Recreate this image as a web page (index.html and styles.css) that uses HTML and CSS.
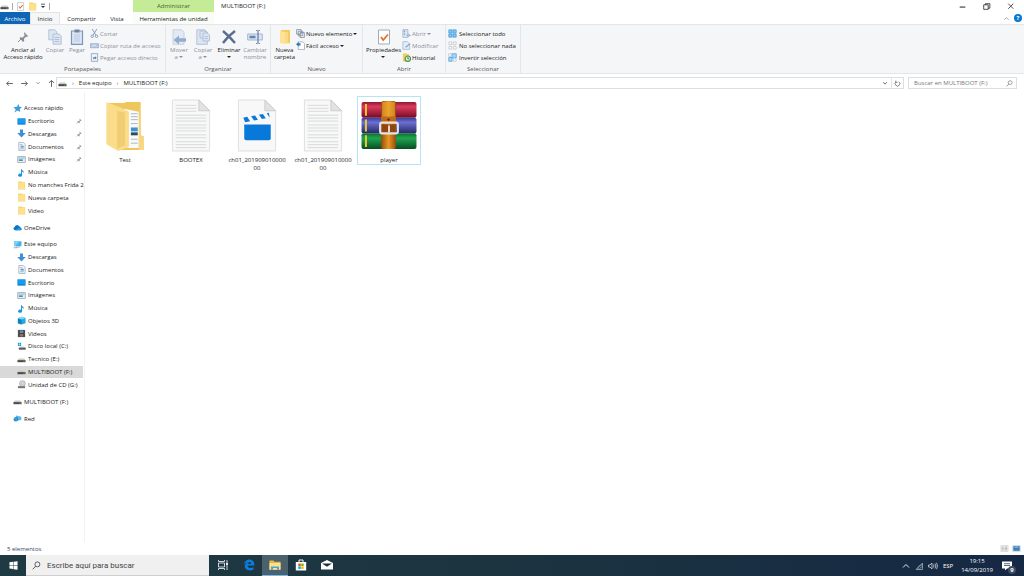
FILE: index.html
```html
<!DOCTYPE html>
<html lang="es">
<head>
<meta charset="utf-8">
<title>MULTIBOOT (F:)</title>
<link rel="stylesheet" href="styles.css">
</head>
<body>
<svg class="sprite" aria-hidden="true">
  <symbol id="drive" viewBox="0 0 10 8"><path d="M2 3h6l1.500 2h-9z" fill="#c9c9c9"/><path d="M.5 4.700h9v2.300h-9z" fill="#4a4a4a"/><path d="M7 5.500h1.500v.7H7z" fill="#59b86a"/></symbol>
  <symbol id="folder" viewBox="0 0 10 11"><path d="M1 .5h4l1 1h3.500v9H1z" fill="#f5cf67"/><path d="M1.500 2h7.500v8H1.500z" fill="#ffe08c"/></symbol>
  <symbol id="bigfolder" viewBox="0 0 14 16"><path d="M3 1h9v13H3z" fill="#f3cb62"/><path d="M2 2l5 1v12l-5-1z" fill="#ffe295"/><path d="M7 3h3v10l2 1.500H7z" fill="#fadb81"/></symbol>
  <symbol id="pin" viewBox="0 0 12 12"><path d="M7 1l4 4-1 1-1-.3-2 2 .2 2.300-1 .9L2.500 7.200l.8-.9 2.300.2 2-2L7 2z" fill="#87909a"/><path d="M4.500 7.500L1 11" stroke="#87909a" stroke-width="1"/></symbol>
  <symbol id="star" viewBox="0 0 10 10"><path d="M6 0l1 3 3 .5-2.500 2L8 9 5 7.200 1.500 9.500 3 6 .5 3.500 4.500 3z" fill="#3d9be0"/></symbol>
  <symbol id="desktop" viewBox="0 0 10 9"><path d="M.5 1h9v7h-9z" fill="#0a84d8"/><path d="M1 1.500h8v5H1z" fill="#159cf0"/></symbol>
  <symbol id="down" viewBox="0 0 10 10"><path d="M3.300.5h3.400v4h3L5 9.500.3 4.500h3z" fill="#3f8fd6"/></symbol>
  <symbol id="doc" viewBox="0 0 10 10"><path d="M2 .5h5l2 2v7H2z" fill="#f5f8fa" stroke="#8a9aa8" stroke-width=".7"/><path d="M3.200 3h3M3.200 7.500h4.500" stroke="#6b96bd" stroke-width=".7"/><path d="M4 4.200h3.500v2H4z" fill="#5b9bd0"/></symbol>
  <symbol id="image" viewBox="0 0 10 9"><path d="M.7 1.200h8.600v6.600H.7z" fill="#e6f1f7" stroke="#8797a2" stroke-width=".7"/><path d="M1.300 2h7.300v2H1.300z" fill="#a9d2ee"/><path d="M2 4.500h4.500v1.400H2z" fill="#386d91"/></symbol>
  <symbol id="music" viewBox="0 0 10 10"><path d="M4.500.5c.5 2 3.800 2 3 5.300C7.200 4.500 6.300 4 5.600 3.900V8a2.200 1.700 0 1 1-1.100-1.500z" fill="#1c93df"/></symbol>
  <symbol id="cloud" viewBox="0 0 12 10"><path d="M2.500 8.500a2.200 2.200 0 0 1-.2-4.300 3.200 3.200 0 0 1 5.700-1 2.600 2.600 0 0 1 2.300 2 1.700 1.700 0 0 1-.2 3.300z" fill="#0b73c8"/><path d="M3 8.500L8 5l3.500 2c0 1-.7 1.500-1.500 1.500z" fill="#2798e3"/></symbol>
  <symbol id="pc" viewBox="0 0 12 10"><path d="M1.500.7h9.800v6.600H1.500z" fill="#42b3ee"/><path d="M1.500.7h7L3 7.300H1.500z" fill="#7fd0f5"/><path d="M4 8.500h5M1 9.300h4" stroke="#718797" stroke-width=".9"/></symbol>
  <symbol id="cube" viewBox="0 0 10 10"><path d="M1 2.500L5.500.7l4 1.600V8L5 9.500 1 8z" fill="#28a8d8"/><path d="M1 2.500l4 1.300v5.700L1 8z" fill="#0c83bd"/><path d="M1 2.500L5.500.7l4 1.600L5 3.800z" fill="#81dcf3"/></symbol>
  <symbol id="film" viewBox="0 0 10 10"><path d="M1 1h8v8H1z" fill="#323840"/><path d="M3 1.500h4v3H3z" fill="#668eb5"/><path d="M3 5.500h4v3H3z" fill="#9b6f58"/><path d="M2 1.500v7M8 1.500v7" stroke="#aaa" stroke-width=".7" stroke-dasharray=".8 .8"/></symbol>
  <symbol id="windrive" viewBox="0 0 10 10"><path d="M1 .8h1.600v1.600H1zM3 .8h1.600v1.600H3zM1 2.800h1.600v1.600H1zM3 2.800h1.600v1.600H3z" fill="#1597e5"/><path d="M3 5h5l1.500 1.500h-7z" fill="#c9c9c9"/><path d="M2 6.300h7.700v2.200H2z" fill="#555"/></symbol>
  <symbol id="cd" viewBox="0 0 10 10"><circle cx="6" cy="4" r="3.300" fill="#d6d9da" stroke="#8e9294" stroke-width=".6"/><circle cx="6" cy="4" r="1" fill="#fff" stroke="#888" stroke-width=".4"/><path d="M1 6.800h8v2.300H1z" fill="#777"/></symbol>
  <symbol id="network" viewBox="0 0 12 10"><path d="M4 1l7 1.500V7L4 8z" fill="#55b8ea"/><circle cx="3.800" cy="6" r="3" fill="#2685c9"/><path d="M1.500 5l3 .4L4 8" stroke="#8bd0ef" fill="none" stroke-width=".7"/></symbol>
  <symbol id="check" viewBox="0 0 14 16"><path d="M1.500 1h11v14h-11z" fill="#fff" stroke="#a3acb5"/><path d="M4 8l2.200 3L11 5.500" fill="none" stroke="#e8702a" stroke-width="1.800"/></symbol>
  <symbol id="copy" viewBox="0 0 14 16"><g fill="#dce6f3" stroke="#a7b8d1" stroke-width=".8"><path d="M.8.8h6l2 2v8h-8z"/><path d="M5 5h6l2.200 2v8.200H5z"/></g><path d="M6.500 8.500h5M6.500 10.500h5M6.500 12.500h5" stroke="#a7b8d1" stroke-width=".8"/></symbol>
  <symbol id="copyto" viewBox="0 0 14 16"><g fill="#dce6f3" stroke="#a7b8d1" stroke-width=".8"><path d="M.8.8h8l2.500 2.500v12H.8z"/><path d="M4 2h5l1.800 1.800V9H4z"/><path d="M7 4h4.500l2 2v6H7z"/></g><path d="M8.500 7.500h3.500M8.500 9.500h3.500" stroke="#a7b8d1" stroke-width=".8"/></symbol>
  <symbol id="paste" viewBox="0 0 14 16"><path d="M1.500 2h11v13.300h-11z" fill="#dbe6f5" stroke="#7d95b9" stroke-width="1.200"/><path d="M4.500.5h5v3h-5z" fill="#71839f"/><path d="M4 6h6M4 8h6M4 10h6M4 12h6" stroke="#b2c3da" stroke-width=".8"/></symbol>
  <symbol id="cut" viewBox="0 0 10 10"><path d="M2.500 0l4 7M7.500 0l-4 7" stroke="#8495b4" fill="none"/><circle cx="2.500" cy="8" r="1.400" fill="none" stroke="#7f9cc8"/><circle cx="7.300" cy="8" r="1.400" fill="none" stroke="#7f9cc8"/></symbol>
  <symbol id="path" viewBox="0 0 10 10"><path d="M.5 3h9v4.500h-9z" fill="#b5c8e4" stroke="#8ba3c9" stroke-width=".7"/><path d="M2 5.500h1l1-1 1 1 1-1 1 1" stroke="#fff" fill="none" stroke-width=".8"/></symbol>
  <symbol id="shortcut" viewBox="0 0 10 10"><path d="M1.500.7h7v8.600h-7z" fill="#eef3fa" stroke="#7d93b7" stroke-width=".8"/><path d="M3.500 7V4.700h2V3.500l2 1.800-2 1.800V6z" fill="#5e7fb1"/></symbol>
  <symbol id="move" viewBox="0 0 16 16"><path d="M2 .8h8.500l2.500 2.500v12H2z" fill="#e2eaf4" stroke="#bccadd" stroke-width=".8"/><path d="M2.500 11L8 6.500v2.700h7v3.600H8v2.700z" fill="#92acd0"/></symbol>
  <symbol id="cross" viewBox="0 0 16 16"><path d="M2 2q6 5 12 12M14 2Q7 7 2 14" stroke="#596d91" stroke-width="2.400" fill="none"/></symbol>
  <symbol id="rename" viewBox="0 0 16 16"><path d="M.7 5h14.600v6H.7z" fill="#dbe5f3" stroke="#a5b7d2"/><path d="M2.500 6.700h6v2.600h-6z" fill="#6684b2"/><path d="M9 1.500c2 0 2 0 2 2v9c0 2 0 2-2 2M13 1.500c-2 0-2 0-2 2v9c0 2 0 2 2 2" fill="none" stroke="#7b8eaf"/></symbol>
  <symbol id="newitem" viewBox="0 0 10 10"><path d="M.7.7h5v5h-5zM2.500 2.500h5v5h-5zM4.500 4h4.800v5.500H4.500z" fill="#f5f7fa" stroke="#6e8092" stroke-width=".8"/></symbol>
  <symbol id="easy" viewBox="0 0 10 10"><path d="M2.500 1h5l2 2v6.500h-7z" fill="#fff" stroke="#8595a5" stroke-width=".7"/><path d="M0 3.500L3 1v1.500h2V5H3v1.200z" fill="#2979b8"/></symbol>
  <symbol id="open" viewBox="0 0 10 10"><path d="M1 .7h5.500v8.600H1z" fill="#dfe8f5" stroke="#91a8cf" stroke-width=".8"/><path d="M2 2h1.500v1.500H2zM2 5h1.500v1.500H2z" fill="#7896c5"/><path d="M5 7h4M7 5l2 2-2 2" fill="none" stroke="#91a8cf"/></symbol>
  <symbol id="edit" viewBox="0 0 10 10"><path d="M1 .7h5l2.500 2.500v6.100H1z" fill="#e4ecf8" stroke="#9cb2d6" stroke-width=".8"/><path d="M4 7l5-4" stroke="#88a6d6" stroke-width="1.400"/></symbol>
  <symbol id="history" viewBox="0 0 10 10"><path d="M1 .5h4l1 1h2v8H1z" fill="#f2cc5d"/><circle cx="6.500" cy="6.300" r="3" fill="#e3f1df" stroke="#49914b" stroke-width="1.200"/><path d="M6.500 4.500v2h1.500" fill="none" stroke="#376"/></symbol>
  <symbol id="all" viewBox="0 0 10 10"><path d="M.5.500h9v9h-9z" fill="#a6d6f8"/><path d="M1 1h3.300v3.300H1zM5.700 1H9v3.300H5.700zM1 5.700h3.300V9H1zM5.700 5.700H9V9H5.700z" fill="#8ac8f3" stroke="#3993d9" stroke-width=".7"/></symbol>
  <symbol id="none" viewBox="0 0 10 10"><path d="M1 1h3v3H1zM6 1h3v3H6zM1 6h3v3H1zM6 6h3v3H6z" fill="#fff" stroke="#b4bbc1" stroke-width=".7"/></symbol>
  <symbol id="invert" viewBox="0 0 10 10"><path d="M4.500.8h4.700v4.700H4.500zM.8 5h3.700v4.200H.8z" fill="#a9d5f6" stroke="#4a9ddd" stroke-width=".8"/><path d="M.8.8h2.700v3H.8zM6 6.500h3v2.700H6z" fill="#fff" stroke="#9ebbd2" stroke-width=".7"/></symbol>
  <symbol id="search" viewBox="0 0 12 12"><circle cx="7.200" cy="4.500" r="3.300" fill="none" stroke="currentColor"/><path d="M4.800 7L1 11" stroke="currentColor" stroke-width="1.100"/></symbol>
  <symbol id="sheet" viewBox="0 0 40 54"><path d="M1 1h27l11 11v41H1z" fill="#f8f8f8" stroke="#dedede"/><path d="M28 1v11h11z" fill="#e2e2e2" stroke="#c4c4c4" stroke-width=".8"/></symbol>
  <symbol id="text" viewBox="0 0 40 54"><use href="#sheet"/><path d="M4.500 6.500h21M4.500 9.500h21M4.500 12.500h21M4.500 16.500h31M4.500 19.500h31M4.500 22.500h31M4.500 26.500h31M4.500 29.500h31M4.500 32.500h31M4.500 36.500h31M4.500 39.500h31M4.500 43.500h31M4.500 46.500h31M4.500 49.500h31" stroke="#d0d3d3" stroke-width=".8"/></symbol>
</svg>

<div class="window">
  <header class="titlebar">
    <div class="quick">
      <svg class="ic"><use href="#drive"/></svg><i class="bar"></i>
      <svg class="ic"><use href="#check"/></svg><svg class="ic"><use href="#folder"/></svg>
      <svg class="ic small" viewBox="0 0 6 6"><path d="M1 1.200h4" stroke="#333" stroke-width=".8"/><path d="M1 3h4L3 5z" fill="#333"/></svg><i class="bar"></i>
    </div>
    <div class="context">Administrar</div>
    <h1 class="title">MULTIBOOT (F:)</h1>
    <div class="controls">
      <button aria-label="Minimizar"><svg class="ic" viewBox="0 0 8 8"><path d="M1.500 4.500h5" stroke="#222" stroke-width=".9"/></svg></button>
      <button aria-label="Restaurar"><svg class="ic" viewBox="0 0 8 8"><path d="M1.500 2.500h4v4h-4zM3 2.500V1.500h4v4H5.500" fill="none" stroke="#222" stroke-width=".7"/></svg></button>
      <button aria-label="Cerrar"><svg class="ic" viewBox="0 0 8 8"><path d="M2 1.500l4.500 4.500M6.500 1.500L2 6" stroke="#222" stroke-width=".7"/></svg></button>
    </div>
  </header>

  <nav class="tabs">
    <button class="tab file">Archivo</button>
    <button class="tab active">Inicio</button>
    <button class="tab share">Compartir</button>
    <button class="tab view">Vista</button>
    <button class="tab tools">Herramientas de unidad</button>
    <div class="help">
      <svg class="ic" viewBox="0 0 8 8"><path d="M2 5l2-1.700L6 5" fill="none" stroke="#999" stroke-width=".7"/></svg>
      <button class="helpbtn" aria-label="Ayuda">?</button>
    </div>
  </nav>

  <section class="ribbon">
    <div class="group clipboard">
      <div class="tools-row">
        <button class="big wide"><svg class="lg"><use href="#pin"/></svg><span>Anclar al<br>Acceso rápido</span></button>
        <button class="big off"><svg class="lg"><use href="#copy"/></svg><span>Copiar</span></button>
        <button class="big off"><svg class="lg"><use href="#paste"/></svg><span>Pegar</span></button>
        <div class="stack">
          <button class="off"><svg class="ic"><use href="#cut"/></svg>Cortar</button>
          <button class="off"><svg class="ic"><use href="#path"/></svg>Copiar ruta de acceso</button>
          <button class="off"><svg class="ic"><use href="#shortcut"/></svg>Pegar acceso directo</button>
        </div>
      </div>
      <div class="caption">Portapapeles</div>
    </div>
    <div class="group organize">
      <div class="tools-row">
        <button class="big off"><svg class="lg"><use href="#move"/></svg><span>Mover<br>a <i class="caret"></i></span></button>
        <button class="big off"><svg class="lg"><use href="#copyto"/></svg><span>Copiar<br>a <i class="caret"></i></span></button>
        <button class="big del"><svg class="lg"><use href="#cross"/></svg><span>Eliminar<br><i class="caret"></i></span></button>
        <button class="big off"><svg class="lg"><use href="#rename"/></svg><span>Cambiar<br>nombre</span></button>
      </div>
      <div class="caption">Organizar</div>
    </div>
    <div class="group new">
      <div class="tools-row">
        <button class="big"><svg class="lg"><use href="#bigfolder"/></svg><span>Nueva<br>carpeta</span></button>
        <div class="stack">
          <button><svg class="ic"><use href="#newitem"/></svg>Nuevo elemento <i class="caret"></i></button>
          <button><svg class="ic"><use href="#easy"/></svg>Fácil acceso <i class="caret"></i></button>
        </div>
      </div>
      <div class="caption">Nuevo</div>
    </div>
    <div class="group openers">
      <div class="tools-row">
        <button class="big props"><svg class="lg"><use href="#check"/></svg><span>Propiedades<br><i class="caret"></i></span></button>
        <div class="stack">
          <button class="off"><svg class="ic"><use href="#open"/></svg>Abrir <i class="caret"></i></button>
          <button class="off"><svg class="ic"><use href="#edit"/></svg>Modificar</button>
          <button><svg class="ic"><use href="#history"/></svg>Historial</button>
        </div>
      </div>
      <div class="caption">Abrir</div>
    </div>
    <div class="group select">
      <div class="tools-row">
        <div class="stack">
          <button><svg class="ic"><use href="#all"/></svg>Seleccionar todo</button>
          <button><svg class="ic"><use href="#none"/></svg>No seleccionar nada</button>
          <button><svg class="ic"><use href="#invert"/></svg>Invertir selección</button>
        </div>
      </div>
      <div class="caption">Seleccionar</div>
    </div>
  </section>

  <div class="address">
    <div class="arrows">
      <button aria-label="Atrás"><svg class="ic" viewBox="0 0 8 8"><path d="M7 4H1.500M3.500 2l-2 2 2 2" fill="none" stroke="#555" stroke-width=".8"/></svg></button>
      <button aria-label="Adelante"><svg class="ic" viewBox="0 0 8 8"><path d="M1 4h5.500M4.500 2l2 2-2 2" fill="none" stroke="#555" stroke-width=".8"/></svg></button>
      <button class="tiny" aria-label="Recientes"><svg class="ic small" viewBox="0 0 8 8"><path d="M2 3l2 2 2-2" fill="none" stroke="#666"/></svg></button>
      <button aria-label="Arriba"><svg class="ic" viewBox="0 0 8 8"><path d="M4 7V1.500M1.800 3.500L4 1.300l2.200 2.200" fill="none" stroke="#555" stroke-width=".8"/></svg></button>
    </div>
    <div class="crumbs">
      <svg class="ic"><use href="#drive"/></svg>
      <span class="sep">›</span><a href="#">Este equipo</a><span class="sep">›</span><a href="#">MULTIBOOT (F:)</a>
      <button class="push" aria-label="Historial de direcciones"><svg class="ic small" viewBox="0 0 8 8"><path d="M1.500 3L4 5.500 6.500 3" fill="none" stroke="#555" stroke-width="1.200"/></svg></button>
      <button class="refresh" aria-label="Actualizar"><svg class="ic" viewBox="0 0 8 8"><path d="M2.200 2.200A2.700 2.700 0 1 0 5.500 2M2 .7v2h2" fill="none" stroke="#555" stroke-width=".8"/></svg></button>
    </div>
    <label class="find"><input type="search" placeholder="Buscar en MULTIBOOT (F:)" aria-label="Buscar en MULTIBOOT (F:)"><svg class="ic"><use href="#search"/></svg></label>
  </div>

  <main class="body">
    <nav class="tree">
      <ul class="nine">
        <li class="root"><svg class="ic"><use href="#star"/></svg><span>Acceso rápido</span></li>
        <li><svg class="ic"><use href="#desktop"/></svg><span>Escritorio</span><svg class="pin"><use href="#pin"/></svg></li>
        <li><svg class="ic"><use href="#down"/></svg><span>Descargas</span><svg class="pin"><use href="#pin"/></svg></li>
        <li><svg class="ic"><use href="#doc"/></svg><span>Documentos</span><svg class="pin"><use href="#pin"/></svg></li>
        <li><svg class="ic"><use href="#image"/></svg><span>Imágenes</span><svg class="pin"><use href="#pin"/></svg></li>
        <li><svg class="ic"><use href="#music"/></svg><span>Música</span></li>
        <li><svg class="ic"><use href="#folder"/></svg><span>No manches Frida 2</span></li>
        <li><svg class="ic"><use href="#folder"/></svg><span>Nueva carpeta</span></li>
        <li><svg class="ic"><use href="#folder"/></svg><span>Video</span></li>
      </ul>
      <ul><li class="root"><svg class="ic"><use href="#cloud"/></svg><span>OneDrive</span></li></ul>
      <ul class="twelve">
        <li class="root"><svg class="ic"><use href="#pc"/></svg><span>Este equipo</span></li>
        <li><svg class="ic"><use href="#down"/></svg><span>Descargas</span></li>
        <li><svg class="ic"><use href="#doc"/></svg><span>Documentos</span></li>
        <li><svg class="ic"><use href="#desktop"/></svg><span>Escritorio</span></li>
        <li><svg class="ic"><use href="#image"/></svg><span>Imágenes</span></li>
        <li><svg class="ic"><use href="#music"/></svg><span>Música</span></li>
        <li><svg class="ic"><use href="#cube"/></svg><span>Objetos 3D</span></li>
        <li><svg class="ic"><use href="#film"/></svg><span>Vídeos</span></li>
        <li><svg class="ic"><use href="#windrive"/></svg><span>Disco local (C:)</span></li>
        <li><svg class="ic"><use href="#drive"/></svg><span>Tecnico (E:)</span></li>
        <li class="current"><svg class="ic"><use href="#drive"/></svg><span>MULTIBOOT (F:)</span></li>
        <li><svg class="ic"><use href="#cd"/></svg><span>Unidad de CD (G:)</span></li>
      </ul>
      <ul><li class="root"><svg class="ic"><use href="#drive"/></svg><span>MULTIBOOT (F:)</span></li></ul>
      <ul><li class="root"><svg class="ic"><use href="#network"/></svg><span>Red</span></li></ul>
    </nav>
    <div class="files">
      <figure class="item">
        <svg class="thumb" viewBox="0 0 40 54"><path d="M2 4h17l2-1h15v34l3 1v14H14z" fill="#eec65c"/><path d="M19 10l15 3v37H22z" fill="#f7f9fb"/><path d="M26 15h7M26 18h7M26 21h7M26 25h7M26 41h7M26 45h7" stroke="#9cabb8" stroke-width=".8"/><path d="M26 29h7v4h-7z" fill="#3b93d0"/><path d="M26 34h7v3h-7z" fill="#31485d"/><path d="M35 7h1v31h3v14h-5z" fill="#f7d781"/><path d="M1 3l15 6 8 4v36l-11 4L1 46z" fill="#fbdc88"/><path d="M12 12l8 2v33l-8 4z" fill="#e8c66d" opacity=".65"/></svg>
        <figcaption>Test</figcaption>
      </figure>
      <figure class="item"><svg class="thumb"><use href="#text"/></svg><figcaption>BOOTEX</figcaption></figure>
      <figure class="item">
        <svg class="thumb" viewBox="0 0 40 54"><use href="#sheet"/><path d="M7 26h27v14q0 2-2 2H9q-2 0-2-2z" fill="#0879d8"/><path d="M6 19l4-.8 3 4.500-5 1zM14 17.500l4-.8 3 4.500-4 .8zM22 16l4-.8 3 4.500-4 .8zM30 14.400l2-.4 1 5z" fill="#0879d8"/></svg>
        <figcaption>ch01_20190901000000</figcaption>
      </figure>
      <figure class="item"><svg class="thumb"><use href="#text"/></svg><figcaption>ch01_20190901000000</figcaption></figure>
      <figure class="item chosen">
        <svg class="thumb rar" viewBox="0 0 58 54">
          <defs>
            <linearGradient id="red" x2="0" y2="1"><stop stop-color="#8d1834"/><stop offset=".3" stop-color="#dc3a5c"/><stop offset="1" stop-color="#750b24"/></linearGradient>
            <linearGradient id="blue" x2="0" y2="1"><stop stop-color="#383b94"/><stop offset=".3" stop-color="#6a70d2"/><stop offset="1" stop-color="#272865"/></linearGradient>
            <linearGradient id="green" x2="0" y2="1"><stop stop-color="#0b6d31"/><stop offset=".3" stop-color="#20a550"/><stop offset="1" stop-color="#064d20"/></linearGradient>
            <linearGradient id="strap"><stop stop-color="#9a4b0b"/><stop offset=".5" stop-color="#e69827"/><stop offset="1" stop-color="#9a4b0b"/></linearGradient>
          </defs>
          <rect x="1" y="3" width="56" height="16" rx="2" fill="url(#red)"/><rect x="1" y="19" width="56" height="16" rx="2" fill="url(#blue)"/><rect x="1" y="35" width="56" height="16" rx="2" fill="url(#green)"/>
          <path d="M5.500 5v12M5.500 21v12M5.500 37v12" stroke="#f0c832" stroke-width="2"/>
          <rect x="21" y="2" width="15" height="49" rx="2" fill="url(#strap)"/><path d="M22 3h13v15H22z" fill="#efaa32" opacity=".6"/><path d="M21 18h15v7H21z" fill="#c06a18"/><path d="M22 26h13v9H22z" fill="#914410"/><circle cx="28.500" cy="21" r="1.200" fill="#512a10"/>
          <rect x="20" y="24" width="18" height="11" rx="2" fill="none" stroke="#e5e5e5" stroke-width="2.200"/><path d="M29 27v7" stroke="#eee" stroke-width="1.800"/>
        </svg>
        <figcaption>player</figcaption>
      </figure>
    </div>
  </main>

  <footer class="status">
    <span>5 elementos</span>
    <div class="views">
      <button aria-label="Detalles"><svg class="ic" viewBox="0 0 10 8"><path d="M1 .8h8v6.400H1z" fill="#f3f3f3" stroke="#bbb" stroke-width=".5"/><path d="M2 2.500h2M5 2.500h3M2 4h2M5 4h3M2 5.500h2M5 5.500h3" stroke="#888" stroke-width=".6"/></svg></button>
      <button aria-label="Iconos grandes"><svg class="ic" viewBox="0 0 10 8"><path d="M.5.5h9v7h-9z" fill="#a9d8f3"/><path d="M1.500 1.500h7v5h-7z" fill="#4a7aa5"/><path d="M2 3l3-1 3 1z" fill="#cde8f7"/></svg></button>
    </div>
  </footer>
</div>

<div class="taskbar">
  <button class="start" aria-label="Inicio"><svg class="ic" viewBox="0 0 10 10"><path d="M.5 1.500l4-.6v3.800h-4zM5 .8L9.500.2v4.500H5zM.5 5.200h4V9l-4-.6zM5 5.200h4.500v4.500L5 9.100z" fill="#fff"/></svg></button>
  <label class="cortana"><svg class="ic"><use href="#search"/></svg><input type="text" placeholder="Escribe aquí para buscar" aria-label="Escribe aquí para buscar"></label>
  <div class="apps">
    <button class="app" aria-label="Vista de tareas"><svg class="ic" viewBox="0 0 12 12"><path d="M1.500 1v1.500h6V1M1.500 11V9.500h6V11M1.500 4h6v4h-6zM10 1v10" fill="none" stroke="#dfe6e9" stroke-width=".9"/><path d="M9 4h2v2H9z" fill="#dfe6e9"/></svg></button>
    <button class="app" aria-label="Edge"><svg class="ic" viewBox="0 0 12 12"><path d="M.8 5.500C1.500 2 4 .5 6.300.5c3.500 0 5.200 2.600 5 6H4.500c.2 2.700 3.500 3.200 6 1.700v2.300C6.500 12.500 1.800 11 1.800 7.200c0-2 1.200-3.300 2.800-4-1.700.2-2.900 1-3.800 2.300zM4.700 4.700h3.600c-.2-2.200-3-2-3.600 0z" fill="#0a7ee0"/></svg></button>
    <button class="app running" aria-label="Explorador"><svg class="ic" viewBox="0 0 12 12"><path d="M.5 1.500h4l1 1.200h6v8H.5z" fill="#e9b93f"/><path d="M.5 4h11v6.700H.5z" fill="#ffe08c"/><path d="M2 10.700V7.500h8v3.200H8V9H4v1.700z" fill="#45a3df"/></svg></button>
    <button class="app" aria-label="Store"><svg class="ic" viewBox="0 0 12 12"><path d="M4 3V1h4v2" fill="none" stroke="#fff"/><path d="M.8 3h10.400v8.500H.8z" fill="#fff"/><path d="M3.300 4.500h2.500V7H3.300z" fill="#f05022"/><path d="M6.200 4.500h2.500V7H6.200z" fill="#7fba00"/><path d="M3.300 7.400h2.500v2.500H3.300z" fill="#00a4ef"/><path d="M6.200 7.400h2.500v2.500H6.200z" fill="#ffb900"/></svg></button>
    <button class="app" aria-label="Correo"><svg class="ic" viewBox="0 0 12 12"><path d="M0 4l6-3 6 3v6.500H0z" fill="#fff"/><path d="M1 4.500h10L7.500 6.700l-1.500 1z" fill="#1c313e"/></svg></button>
  </div>
  <div class="tray">
    <svg class="ic" viewBox="0 0 8 8"><path d="M1 5.500l3-3 3 3" fill="none" stroke="#fff" stroke-width=".9"/></svg>
    <svg class="ic" viewBox="0 0 8 8"><path d="M1 7.500L7.500 1v6.500zM3 7.500A4 4 0 0 1 7.500 3M5 7.500A2 2 0 0 1 7.500 5" fill="none" stroke="#aebac4" stroke-width=".7"/></svg>
    <svg class="ic wide-ic" viewBox="0 0 10 8"><path d="M.5 3H2l2-2v6L2 5H.5zM5.500 2.500q1 1.500 0 3M7 1.500q1.800 2.500 0 5M8.500.8q2 3.200 0 6.400" fill="none" stroke="#e5ebef" stroke-width=".7"/></svg>
    <span>ESP</span>
    <time class="clock">19:15<br>14/09/2019</time>
    <button class="notify" aria-label="9 notificaciones"><svg class="ic" viewBox="0 0 10 10"><path d="M0 .5h10v7H5L3 9.500v-2H0z" fill="#fff"/><path d="M2 2.700h6M2 4.500h6" stroke="#345" stroke-width=".8"/></svg><b class="badge">9</b></button>
  </div>
</div>
</body>
</html>
```
FILE: styles.css
```css
* { box-sizing: border-box; }
html, body { height: 100%; }
body {
  margin: 0;
  display: flex;
  flex-direction: column;
  background: #fff;
  color: #222;
  font: 6px/8px "Open Sans", "Noto Sans", sans-serif;
  overflow: hidden;
}
button, input { font: inherit; color: inherit; border: 0; padding: 0; margin: 0; background: none; }
button { white-space: nowrap; }
input { outline: none; min-width: 0; }
a { color: inherit; text-decoration: none; }
ul { list-style: none; margin: 0; padding: 0; }
.sprite { position: absolute; width: 0; height: 0; }
.ic { width: 9px; height: 9px; flex: none; display: block; }
.small { width: 6px; height: 6px; }
.window { flex: 1; min-height: 0; display: flex; flex-direction: column; }

.titlebar { display: flex; height: 12px; align-items: center; padding-right: 2px; }
.quick { width: 133px; display: flex; align-items: center; gap: 3px; }
.bar { width: 1px; height: 7px; background: #aaa; }
.context { width: 81px; align-self: stretch; background: #c4eb95; color: #48613a; text-align: center; line-height: 12px; }
.title { margin: 0 0 0 7px; font-size: 6px; font-weight: 400; }
.controls { margin-left: auto; display: flex; }
.controls button { width: 24px; display: flex; justify-content: center; }

.tabs { display: flex; height: 12px; }
.tab { text-align: center; height: 12px; line-height: 12px; padding-top: 1px; }
.file { width: 30px; background: #0f65b5; color: #fff; }
.active { width: 30px; background: #f5f6f7; border: 1px solid #e2e4e6; border-bottom: 0; padding-top: 0; }
.share { width: 43px; }
.view { width: 28px; }
.tools { width: 81px; margin-left: 2px; background: #fafcf7; }
.help { margin-left: auto; display: flex; align-items: center; gap: 3px; padding-right: 2px; }
.helpbtn { width: 8px; height: 8px; border-radius: 50%; background: #0878d1; color: #fff; font-weight: 700; line-height: 8px; }

.ribbon { display: flex; height: 50px; background: #f5f6f8; border: solid #e3e5e8; border-width: 1px 0; }
.group { display: flex; flex-direction: column; justify-content: space-between; border-right: 1px solid #e4e6e9; }
.clipboard { width: 166px; }
.organize { width: 105px; }
.new { width: 92px; }
.openers { width: 83px; }
.select { width: 75px; }
.tools-row { display: flex; padding: 4px 2px 0; }
.caption { text-align: center; height: 8px; color: #555; }
.big { width: 22px; display: flex; flex-direction: column; align-items: center; gap: 2px; line-height: 7px; }
.big span { min-height: 14px; }
.lg { width: 16px; height: 16px; }
.wide { width: 42px; }
.wide .lg { width: 12px; }
.organize .tools-row { padding: 4px 1px 0; }
.organize .big { width: 24px; }
.organize .big.del { width: 28px; }
.new .big { width: 23px; }
.props { width: 37px; }
.stack { display: flex; flex-direction: column; gap: 3px; }
.clipboard .stack { padding-left: 2px; }
.stack button { display: flex; align-items: center; gap: 1px; height: 9px; }
.select .stack button { gap: 2px; }
.off { color: #8b919a; }
.caret { display: inline-block; border: 2px solid transparent; border-top-color: currentColor; border-bottom: 0; vertical-align: middle; }

.address { display: flex; height: 18px; align-items: center; padding: 0 7px 0 5px; }
.arrows { display: flex; width: 51px; gap: 6px; align-items: center; }
.crumbs { flex: 1; height: 12px; border: 1px solid #dedede; display: flex; align-items: center; gap: 5px; padding-left: 1px; }
.sep { color: #555; }
.push { margin-left: auto; }
.refresh { border-left: 1px solid #e2e2e2; height: 10px; padding: 0 2px; margin-left: -2px; }
.refresh .ic { width: 7px; height: 7px; }
.find { display: flex; align-items: center; width: 109px; height: 12px; margin-left: 4px; border: 1px solid #dedede; padding: 0 3px 0 5px; color: #666; }
.find input { flex: 1; }
.find .ic { width: 7px; height: 7px; }
::placeholder { color: #777; opacity: 1; }

.body { flex: 1; min-height: 0; display: flex; }
.tree { width: 85px; padding: 10px 1px 0 0; border-right: 1px solid #f2f2f2; display: flex; flex-direction: column; gap: 4px; }
.tree ul { display: grid; grid-auto-rows: 13px; }
.tree .nine { height: 115px; grid-auto-rows: 1fr; }
.tree .twelve { height: 153px; grid-auto-rows: 1fr; }
.tree li { display: flex; align-items: center; gap: 2px; padding-left: 17px; min-width: 0; min-height: 0; }
.tree li.root { padding-left: 13px; }
.tree span { white-space: nowrap; }
.tree .current { background: #d9d9d9; }
.pin { width: 6px; height: 6px; margin: 0 1px 0 auto; flex: none; }
.files { flex: 1; display: flex; flex-wrap: wrap; align-content: flex-start; align-items: flex-start; gap: 2px; padding: 4px 8px; }
.item { margin: 0; width: 64px; padding: 3px 1px 0; display: flex; flex-direction: column; align-items: center; min-height: 69px; }
.thumb { width: 40px; height: 53px; }
.rar { width: 58px; }
.item figcaption { width: 60px; margin-top: 4px; text-align: center; overflow-wrap: anywhere; }
.chosen { border: 1px solid #b9e2f5; padding: 2px 0 0; }

.status { height: 13px; display: flex; align-items: center; justify-content: space-between; padding: 0 3px 0 7px; color: #34496a; }
.views { display: flex; gap: 3px; }

.taskbar { display: flex; height: 21px; background: linear-gradient(90deg, #203a43, #1b3440 50%, #162844); color: #fff; }
.taskbar button { display: flex; align-items: center; justify-content: center; }
.start { width: 26px; }
.cortana { width: 183px; display: flex; align-items: center; gap: 6px; padding-left: 6px; background: #f0f0f0; color: #333; border-bottom: 1px solid #cfcfcf; font-family: Roboto, "Open Sans", sans-serif; font-size: 8px; }
.cortana input { flex: 1; }
.cortana ::placeholder { color: #444; }
.apps { display: flex; padding-left: 1px; }
.app { width: 26px; border-bottom: 1px solid transparent; }
.app .ic { width: 12px; height: 12px; }
.running { background: #4b626c; border-color: #78b9ed; }
.tray { margin-left: auto; display: flex; align-items: center; gap: 5px; padding-right: 12px; }
.tray .ic { width: 8px; height: 8px; }
.tray .wide-ic { width: 10px; }
.clock { text-align: center; line-height: 9px; margin: 0 4px 0 3px; }
.notify { position: relative; }
.tray .notify .ic { width: 10px; height: 10px; }
.badge { position: absolute; right: -4px; bottom: -3px; width: 8px; height: 8px; border-radius: 50%; background: #3c4c5c; font-size: 6px; line-height: 8px; text-align: center; }
```
